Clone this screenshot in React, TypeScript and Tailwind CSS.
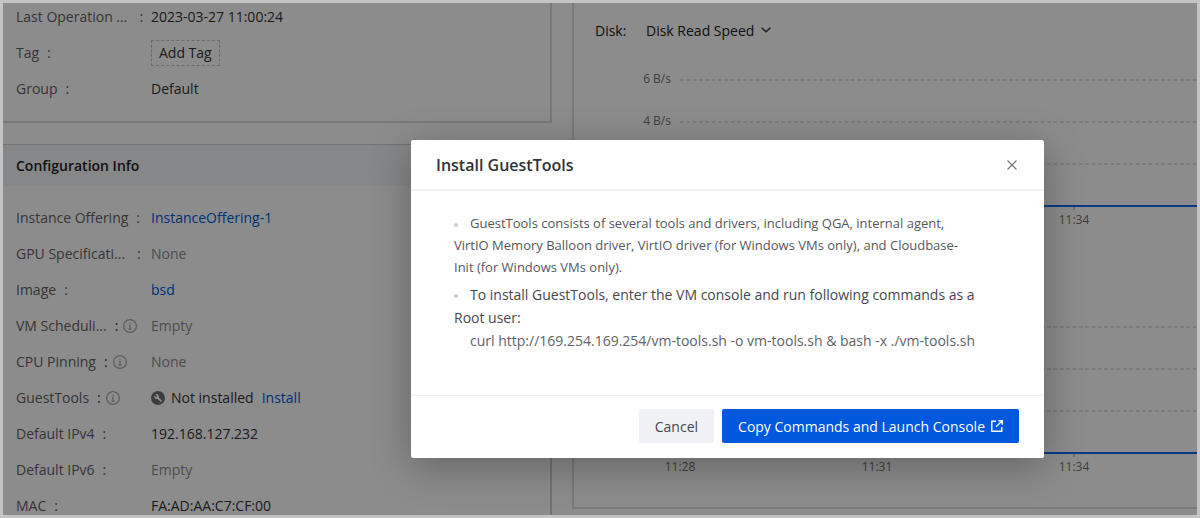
import type { ReactNode } from "react";

const GRID_ROWS = [0, 42, 84];

interface RowProps {
  label: string;
  info?: boolean;
  clipped?: boolean;
  muted?: boolean;
  children: ReactNode;
}

function InfoIcon() {
  return (
    <svg viewBox="0 0 14 14" className="size-[14px] text-[#a8a8a8]" fill="none" stroke="currentColor">
      <circle cx="7" cy="7" r="6.4" strokeWidth="1.2" />
      <path d="M7 3.4v1.4M5.8 6.3H7v3.6M5.6 10.1h2.8" strokeWidth="1.2" />
    </svg>
  );
}

function WrenchIcon() {
  return (
    <svg viewBox="0 0 14 14" className="size-[14px] shrink-0">
      <circle cx="7" cy="7" r="7" fill="#6b6e72" />
      <path
        d="M3.4 4.4 5 5.9l1-1-1.5-1.6a2.6 2.6 0 0 1 3.4 3.3l2.7 2.7a.9.9 0 0 1-1.3 1.3L6.6 7.9a2.6 2.6 0 0 1-3.2-3.5Z"
        fill="#fff"
      />
    </svg>
  );
}

function Row({ label, info, clipped, muted, children }: RowProps) {
  return (
    <div className="flex h-[27px] items-center">
      <dt className="flex w-[135px] shrink-0 items-center whitespace-nowrap text-[#5f6368]">
        {label}
        <span className={info ? "pr-[5px] pl-2 text-[#333]" : clipped ? "pl-3" : "pl-2"}>:</span>
        {info && <InfoIcon />}
      </dt>
      <dd className={muted ? "text-[#8c8c8c]" : "flex items-center text-[#333]"}>{children}</dd>
    </div>
  );
}

interface ChartProps {
  name: string;
  rates?: string[];
  ticks: { x: number; time: string }[];
}

function Chart({ name, rates = [], ticks }: ChartProps) {
  return (
    <svg role="img" aria-label={name} className="block h-[160px] w-full overflow-hidden text-[12px]" fill="#737373">
      {GRID_ROWS.map((y) => (
        <line
          key={y}
          x1="106"
          x2="100%"
          y1={y + 11}
          y2={y + 11}
          stroke="#e0e0e0"
          strokeWidth="2"
          strokeDasharray="3.8 2.53"
        />
      ))}
      {rates.map((rate, i) => (
        <text key={rate} x="97" y={GRID_ROWS[i] + 14} textAnchor="end">
          {rate}
        </text>
      ))}
      <line x1="106" x2="100%" y1="137" y2="137" stroke="#0a6cf0" strokeWidth="2" />
      {ticks.map(({ x, time }) => (
        <g key={time}>
          <line x1={x} x2={x} y1="138" y2="141" stroke="#a0a0a0" />
          <text x={x} y="155" textAnchor="middle">
            {time}
          </text>
        </g>
      ))}
    </svg>
  );
}

function Bullet() {
  return <span className="mr-3 inline-block size-1 rounded-full bg-[#c8c9cc] align-middle" />;
}

function InstallDialog() {
  return (
    <div
      role="dialog"
      aria-labelledby="dialog-title"
      className="w-[633px] rounded-[2px] bg-white text-[#45484d] shadow-[0_8px_40px_rgba(0,0,0,0.3)]"
    >
      <header className="flex h-[51px] items-center justify-between border-b-2 border-[#f2f2f4] px-[25px]">
        <h2 id="dialog-title" className="text-[16px] font-semibold text-[#303338]">
          Install GuestTools
        </h2>
        <button type="button" aria-label="Close" className="p-[2px] text-[#777]">
          <svg viewBox="0 0 10 10" className="size-[10px]" fill="none" stroke="currentColor" strokeWidth="1.2">
            <path d="m.5.5 9 9m0-9-9 9" />
          </svg>
        </button>
      </header>
      <div className="h-[204px] px-[43px] pt-[21px]">
        <ul>
          <li className="text-[13px] leading-[22px] text-[#55585d]">
            <Bullet />
            GuestTools consists of several tools and drivers, including QGA, internal agent,
            <br />
            VirtIO Memory Balloon driver, VirtIO driver (for Windows VMs only), and Cloudbase-
            <br />
            Init (for Windows VMs only).
          </li>
          <li className="mt-[5px] text-[14px] leading-[23px]">
            <Bullet />
            To install GuestTools, enter the VM console and run following commands as a
            <br />
            Root user:
            <p className="pl-4 text-[#5f6368]">curl http://169.254.169.254/vm-tools.sh -o vm-tools.sh &amp; bash -x ./vm-tools.sh</p>
          </li>
        </ul>
      </div>
      <footer className="flex h-[63px] items-center justify-end gap-2 border-t border-[#ececee] px-[25px] pb-[2px] text-[14px]">
        <button type="button" className="h-[34px] rounded-[2px] bg-[#f0f1f5] px-4">
          Cancel
        </button>
        <button type="button" className="flex h-[34px] items-center gap-[6px] rounded-[2px] bg-[#0058dc] px-4 text-white">
          Copy Commands and Launch Console
          <svg viewBox="0 0 12 12" className="size-3" fill="none" stroke="currentColor" strokeWidth="1.4">
            <path d="M5 1.2H.8v10h10V7M7.4.8h3.9v3.9M11 1 5.2 6.8" />
          </svg>
        </button>
      </footer>
    </div>
  );
}

export default function App() {
  return (
    <div className="relative h-screen overflow-hidden border-3 border-[#c4c4c4] bg-white font-['Open_Sans',sans-serif] text-[14px]">
      <main className="flex h-full">
        <div className="w-[549px] shrink-0">
          <section className="border-r-2 border-b-2 border-[#dcdcdc] pb-[19px] pl-[13px]">
            <dl className="flex flex-col gap-[9px]">
              <Row label="Last Operation ..." clipped>2023-03-27 11:00:24</Row>
              <Row label="Tag">
                <button type="button" className="h-[26px] border border-dashed border-[#c4c4c4] px-[7px]">
                  Add Tag
                </button>
              </Row>
              <Row label="Group">Default</Row>
            </dl>
          </section>
          <section className="mt-[21px] border-t border-r-2 border-[#d0d0d0] pb-5">
            <h2 className="flex h-[41px] items-center bg-[#f4f6f9] pl-[13px] text-[14px] font-semibold text-[#222]">
              Configuration Info
            </h2>
            <dl className="flex flex-col gap-[9px] pt-[18px] pl-[13px]">
              <Row label="Instance Offering">
                <a href="#offering" className="text-[#0058dc]">InstanceOffering-1</a>
              </Row>
              <Row label="GPU Specificati..." clipped muted>None</Row>
              <Row label="Image">
                <a href="#image" className="text-[#0058dc]">bsd</a>
              </Row>
              <Row label="VM Scheduli..." info muted>Empty</Row>
              <Row label="CPU Pinning" info muted>None</Row>
              <Row label="GuestTools" info>
                <WrenchIcon />
                <span className="ml-[6px]">Not installed</span>
                <a href="#install" className="ml-2 text-[#0058dc]">Install</a>
              </Row>
              <Row label="Default IPv4">192.168.127.232</Row>
              <Row label="Default IPv6" muted>Empty</Row>
              <Row label="MAC">FA:AD:AA:C7:CF:00</Row>
            </dl>
          </section>
        </div>
        <section className="ml-5 h-[506px] min-w-0 flex-1 border-b-2 border-l-2 border-[#dcdcdc] text-[#222]">
          <div className="flex h-[54px] items-center pl-[21px]">
            <label htmlFor="disk-metric" className="w-[51px]">Disk:</label>
            <select id="disk-metric" className="appearance-none">
              <option>Disk Read Speed</option>
            </select>
            <svg viewBox="0 0 10 6" className="ml-[6px] h-[6px] w-[10px]" fill="none" stroke="#333" strokeWidth="1.4">
              <path d="m.6.8 4.4 4 4.4-4" />
            </svg>
          </div>
          <div className="flex flex-col gap-[87px] pt-3">
            <Chart name="Disk read speed" rates={["6 B/s", "4 B/s"]} ticks={[{ x: 500, time: "11:34" }]} />
            <Chart
              name="Disk write speed"
              ticks={[
                { x: 106, time: "11:28" },
                { x: 303, time: "11:31" },
                { x: 500, time: "11:34" },
              ]}
            />
          </div>
        </section>
      </main>
      <div className="absolute inset-0 bg-black/45 pt-[137px] pl-[408px]">
        <InstallDialog />
      </div>
    </div>
  );
}
